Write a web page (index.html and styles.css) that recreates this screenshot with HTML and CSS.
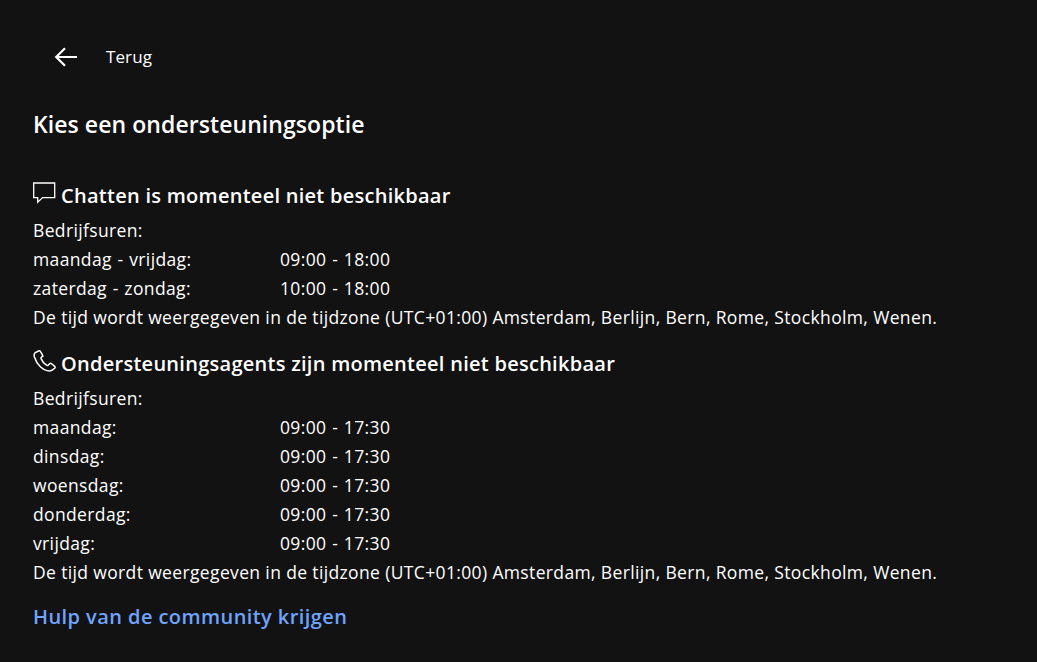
FILE: index.html
```html
<!DOCTYPE html>
<html lang="nl">
<head>
    <meta charset="UTF-8">
    <meta name="viewport" content="width=device-width, initial-scale=1.0">
    <title>Kies een ondersteuningsoptie</title>
    <link rel="stylesheet" href="styles.css">
</head>
<body>
<div class="page">
    <div class="back-row">
        <svg class="back-icon" width="24" height="20" viewBox="0 0 24 20" fill="none" stroke="#fff" stroke-width="2.200">
            <path d="M23 10H2.500M11 1.200 2.200 10l8.800 8.800"/>
        </svg>
        <span class="back-label">Terug</span>
    </div>
    <h1 class="title">Kies een ondersteuningsoptie</h1>

    <section class="option">
        <h2 class="option-head">
            <svg class="option-icon" width="23" height="22" viewBox="0 0 23 22" fill="none" stroke="#fff" stroke-width="1.300">
                <path d="M.7 1h21v14.600H9.600l-4.900 4.600v-4.600h-4z"/>
            </svg>
            <span>Chatten is momenteel niet beschikbaar</span>
        </h2>
        <div class="line">Bedrijfsuren:</div>
        <div class="hours"><span>maandag - vrijdag:</span><span>09:00 - 18:00</span></div>
        <div class="hours"><span>zaterdag - zondag:</span><span>10:00 - 18:00</span></div>
        <div class="line">De tijd wordt weergegeven in de tijdzone (UTC+01:00) Amsterdam, Berlijn, Bern, Rome, Stockholm, Wenen.</div>
    </section>

    <section class="option">
        <h2 class="option-head">
            <svg class="option-icon" width="23" height="22" viewBox="0 0 23 22" fill="none" stroke="#fff" stroke-width="1.500">
                <path d="M5.600 1 2.300 2.600C1 3.400.9 5 1.400 7c1.200 4 3.300 7.300 6.200 10 2.700 2.500 5.800 3.900 8.800 3.900 2 0 3.500-.9 5.300-2.700.5-.6.5-1.300 0-1.800l-3.100-2.700c-.6-.5-1.300-.5-1.900 0l-1.500 1.400c-.5.400-1.100.5-1.700.1-2.400-1.500-4.300-3.900-5.400-6.600-.2-.6-.1-1.100.4-1.500l1.300-1C9.300 5.600 9.500 5 9.200 4.300L7.500 1.600C7.100.9 6.300.7 5.600 1z"/>
            </svg>
            <span>Ondersteuningsagents zijn momenteel niet beschikbaar</span>
        </h2>
        <div class="line">Bedrijfsuren:</div>
        <div class="hours"><span>maandag:</span><span>09:00 - 17:30</span></div>
        <div class="hours"><span>dinsdag:</span><span>09:00 - 17:30</span></div>
        <div class="hours"><span>woensdag:</span><span>09:00 - 17:30</span></div>
        <div class="hours"><span>donderdag:</span><span>09:00 - 17:30</span></div>
        <div class="hours"><span>vrijdag:</span><span>09:00 - 17:30</span></div>
        <div class="line">De tijd wordt weergegeven in de tijdzone (UTC+01:00) Amsterdam, Berlijn, Bern, Rome, Stockholm, Wenen.</div>
    </section>

    <a class="community" href="#">Hulp van de community krijgen</a>
</div>
</body>
</html>
```

FILE: styles.css
```css
html, body {
    height: 100%;
}
body {
    margin: 0;
    background-color: #121212;
    color: #fff;
    font-family: "Open Sans", "Noto Sans", sans-serif;
    font-size: 17px;
    overflow: hidden;
}
.page {
    padding: 43px 33px 0;
}
.back-row {
    display: flex;
    align-items: center;
    height: 28px;
    padding-left: 21px;
}
.back-icon {
    width: 24px;
    height: 20px;
}
.back-label {
    margin-left: 28px;
    margin-top: -2px;
    font-size: 17px;
    letter-spacing: .1px;
}
.title {
    margin: 36px 0 0;
    font-size: 23px;
    line-height: 34px;
    font-weight: 600;
    letter-spacing: .07px;
}
.option {
    margin-top: 16px;
}
.option:first-of-type {
    margin-top: 39px;
}
.option-head {
    display: flex;
    align-items: flex-end;
    margin: 0 0 5px;
    height: 31px;
    font-size: 20px;
    line-height: 31px;
    font-weight: 600;
    letter-spacing: .27px;
    white-space: nowrap;
}
.option-icon {
    flex: none;
    margin: 0 5px 7px 0;
}
.line, .hours {
    line-height: 29px;
    height: 29px;
    font-size: 17.5px;
    letter-spacing: .36px;
    white-space: nowrap;
}
.hours {
    display: grid;
    grid-template-columns: 247px auto;
    word-spacing: .8px;
}
.community {
    display: block;
    margin-top: 15px;
    color: #6ea4ff;
    font-size: 20px;
    line-height: 30px;
    font-weight: 600;
    letter-spacing: .43px;
    text-decoration: none;
}
```
